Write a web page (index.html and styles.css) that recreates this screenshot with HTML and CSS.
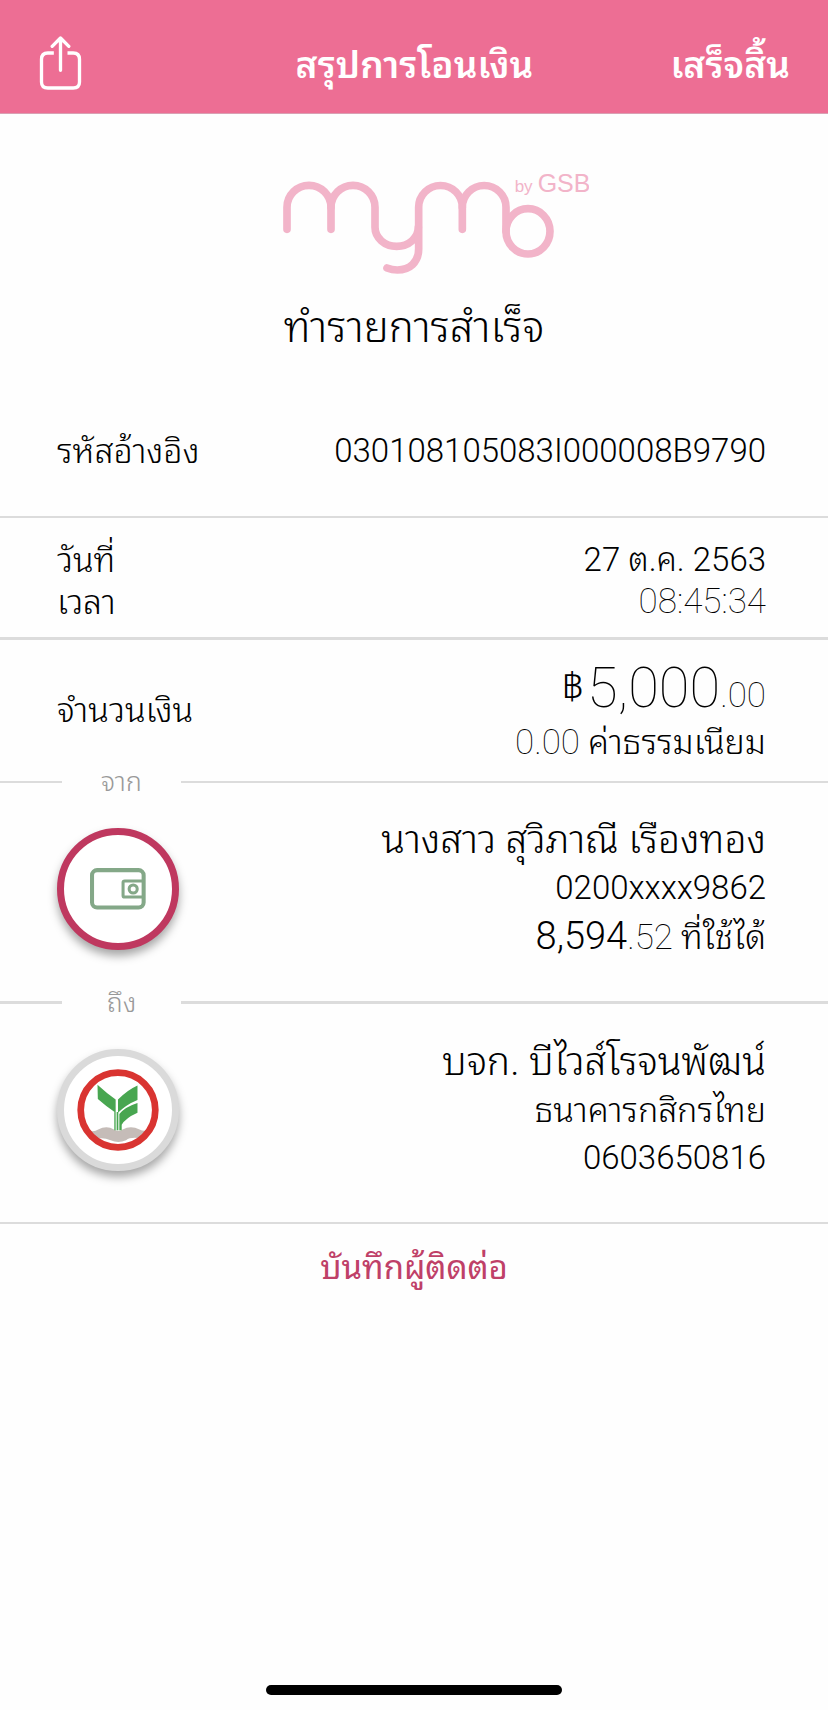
FILE: index.html
```html
<!DOCTYPE html>
<html lang="th">
<head>
<meta charset="utf-8">
<meta name="viewport" content="width=device-width, initial-scale=1">
<title>สรุปการโอนเงิน</title>
<link rel="stylesheet" href="styles.css">
</head>
<body>
<header class="topbar">
  <button class="share" type="button" aria-label="แชร์">
    <svg viewBox="118 106 128 162" width="43" height="54" fill="none" stroke="currentColor" stroke-width="10" stroke-linecap="round" stroke-linejoin="round" aria-hidden="true">
      <path d="M162 157H144Q125 157 125 176V244Q125 262 144 262H220Q239 262 239 244V176Q239 157 220 157H203" stroke-linecap="butt"/>
      <path d="M182 209V113M157 137L182 112L207 137"/>
    </svg>
  </button>
  <h1 class="title">สรุปการโอนเงิน</h1>
  <button class="done" type="button">เสร็จสิ้น</button>
</header>

<main class="receipt">
  <section class="brand">
    <svg class="logo" viewBox="-63 60 1050 318" width="350" height="106" role="img" aria-label="mymo by GSB">
      <g fill="none" stroke="currentColor" stroke-width="23" stroke-linecap="round">
        <path d="M81 238V172A65 65 0 0 1 213 172V238"/>
        <path d="M213 172A65 65 0 0 1 345 172V232A65 57 0 0 0 475 232"/>
        <path d="M607 238V172A65 65 0 0 0 476 172V296C476 338 448 360 412 360Q396 360 381 354"/>
        <path d="M607 172A65 65 0 0 1 738 172V244"/>
        <ellipse cx="804" cy="244" rx="66" ry="68"/>
      </g>
      <text class="logo-by" x="764" y="125">by</text>
      <text class="logo-gsb" x="833" y="125">GSB</text>
    </svg>
    <h2 class="status">ทำรายการสำเร็จ</h2>
  </section>

  <section class="row row-ref">
    <span class="label">รหัสอ้างอิง</span>
    <span class="value">030108105083I000008B9790</span>
  </section>

  <section class="row row-date">
    <div class="stack">
      <span class="label">วันที่</span>
      <span class="label">เวลา</span>
    </div>
    <div class="stack stack-end">
      <span class="value">27 ต.ค. 2563</span>
      <span class="value thin">08:45:34</span>
    </div>
  </section>

  <section class="row row-amount">
    <span class="label amount-label">จำนวนเงิน</span>
    <div class="stack stack-end">
      <span class="amount"><span class="baht">฿</span><span class="sum">5,000</span><span class="thin">.00</span></span>
      <span class="value"><span class="thin">0.00</span> <span class="label">ค่าธรรมเนียม</span></span>
    </div>
  </section>

  <div class="divider"><span>จาก</span></div>
  <section class="row row-party">
    <div class="avatar avatar-from">
      <svg viewBox="272 692 166 124" width="56" height="42" fill="none" stroke="currentColor" aria-hidden="true">
        <rect x="278" y="698" width="153" height="111" rx="15" stroke-width="12"/>
        <path d="M430 730H375Q370 730 370 735V773Q370 778 375 778H430" stroke-width="9"/>
        <circle cx="400" cy="754" r="12" stroke-width="9"/>
      </svg>
    </div>
    <div class="stack stack-end">
      <span class="name">นางสาว สุวิภาณี เรืองทอง</span>
      <span class="value">0200xxxx9862</span>
      <span class="value"><span class="balance">8,594</span><span class="thin">.52</span> <span class="label">ที่ใช้ได้</span></span>
    </div>
  </section>

  <div class="divider divider-bold"><span>ถึง</span></div>
  <section class="row row-party">
    <div class="avatar">
      <svg viewBox="232 306 244 244" width="82" height="82" aria-hidden="true">
        <path d="M270 490Q284 494 295 486Q320 472 342 486Q355 494 368 486Q392 472 418 486Q428 491 440 489L420 512Q390 508 378 518Q355 528 332 518Q310 508 288 514Z" fill="#c5bcb8"/>
        <circle cx="354" cy="428" r="111" fill="none" stroke="#d93431" stroke-width="20"/>
        <path d="M293 353Q320 378 347 397V436Q320 418 294 395ZM354 397Q381 369 412 355V398Q378 412 354 436ZM358 440Q374 419 412 407V436Q376 452 365 472V488H358ZM343 434H347V488H343ZM350 434H355V488H350Z" fill="#48a650"/>
      </svg>
    </div>
    <div class="stack stack-end">
      <span class="name">บจก. บีไวส์โรจนพัฒน์</span>
      <span class="label">ธนาคารกสิกรไทย</span>
      <span class="value">0603650816</span>
    </div>
  </section>

  <div class="save"><button class="save-contact" type="button">บันทึกผู้ติดต่อ</button></div>
</main>
<div class="home-bar"></div>
</body>
</html>
```
FILE: styles.css
```css
* { box-sizing: border-box; }

body {
  margin: 0;
  min-height: 100vh;
  display: flex;
  flex-direction: column;
  background: #fefefe;
  color: #000;
  font-family: Roboto, "Noto Sans Thai Looped", "Noto Looped Thai", "Loma", "Garuda", "Noto Sans Thai", sans-serif;
  font-weight: 300;
  font-size: 33px;
  line-height: 48px;
}

button {
  padding: 0;
  border: 0;
  background: none;
  color: inherit;
  font: inherit;
  cursor: pointer;
}

.topbar {
  display: grid;
  grid-template-columns: 1fr auto 1fr;
  align-items: center;
  height: 114px;
  padding: 18px 38px 6px 39px;
  border-bottom: 1px solid #d9a0b3;
  background: #ed6e94;
  color: #fff;
}

.share { justify-self: start; display: flex; }
.title, .done { margin: 0; padding-top: 6px; font-size: 37px; font-weight: 600; line-height: 48px; }
.done { justify-self: end; }

.brand {
  display: flex;
  flex-direction: column;
  align-items: center;
  gap: 24px;
  padding-top: 56px;
}

.logo { color: #f2b4c9; }
.logo text { fill: currentColor; font-family: "Liberation Sans", sans-serif; }
.logo-by { font-size: 51px; }
.logo-gsb { font-size: 75px; }

.status { margin: 0; font-size: 42px; font-weight: 300; line-height: 56px; }

.row {
  display: flex;
  justify-content: space-between;
  align-items: center;
  padding: 0 62px 0 57px;
}

.stack { display: flex; flex-direction: column; }
.stack-end { align-items: flex-end; text-align: right; }
.label { font-size: 34px; font-weight: 300; }
.thin { font-size: 35px; font-weight: 100; }

.row-ref { padding-top: 71px; padding-bottom: 41px; border-bottom: 2px solid #dcdcdc; }
.row-date { padding-top: 21px; padding-bottom: 14px; border-bottom: 3px solid #dcdcdc; line-height: 42px; }
.row-amount { padding-top: 24px; padding-bottom: 14px; }

.amount { line-height: 44px; }
.amount-label { padding-bottom: 12px; }
.sum { font-size: 56px; font-weight: 100; }
.baht { margin-right: 4px; font-size: 38px; vertical-align: 8px; }
.balance { font-size: 38px; }
.name { font-size: 39px; }

.divider {
  display: flex;
  align-items: center;
  height: 2px;
  color: #999;
  font-size: 27px;
}
.divider::before, .divider::after { content: ""; height: 2px; background: #dcdcdc; }
.divider::before { width: 62px; }
.divider::after { flex: 1; }
.divider span { width: 119px; text-align: center; }
.divider-bold { height: 3px; }
.divider-bold::before, .divider-bold::after { height: 3px; }

.row-party { padding-top: 32px; padding-bottom: 38px; min-height: 218px; }

.avatar {
  display: flex;
  justify-content: center;
  align-items: center;
  width: 122px;
  height: 122px;
  border: 7px solid #dadada;
  border-radius: 50%;
  background: #fff;
  box-shadow: 0 6px 10px rgba(0, 0, 0, 0.35);
}
.avatar-from { border-color: #bf385f; color: #84a888; }

.save { border-top: 2px solid #dcdcdc; padding-top: 20px; text-align: center; }
.save-contact { color: #bf4068; font-weight: 400; }

.home-bar {
  width: 296px;
  height: 10px;
  margin: auto auto 15px;
  border-radius: 5px;
  background: #000;
}
```
